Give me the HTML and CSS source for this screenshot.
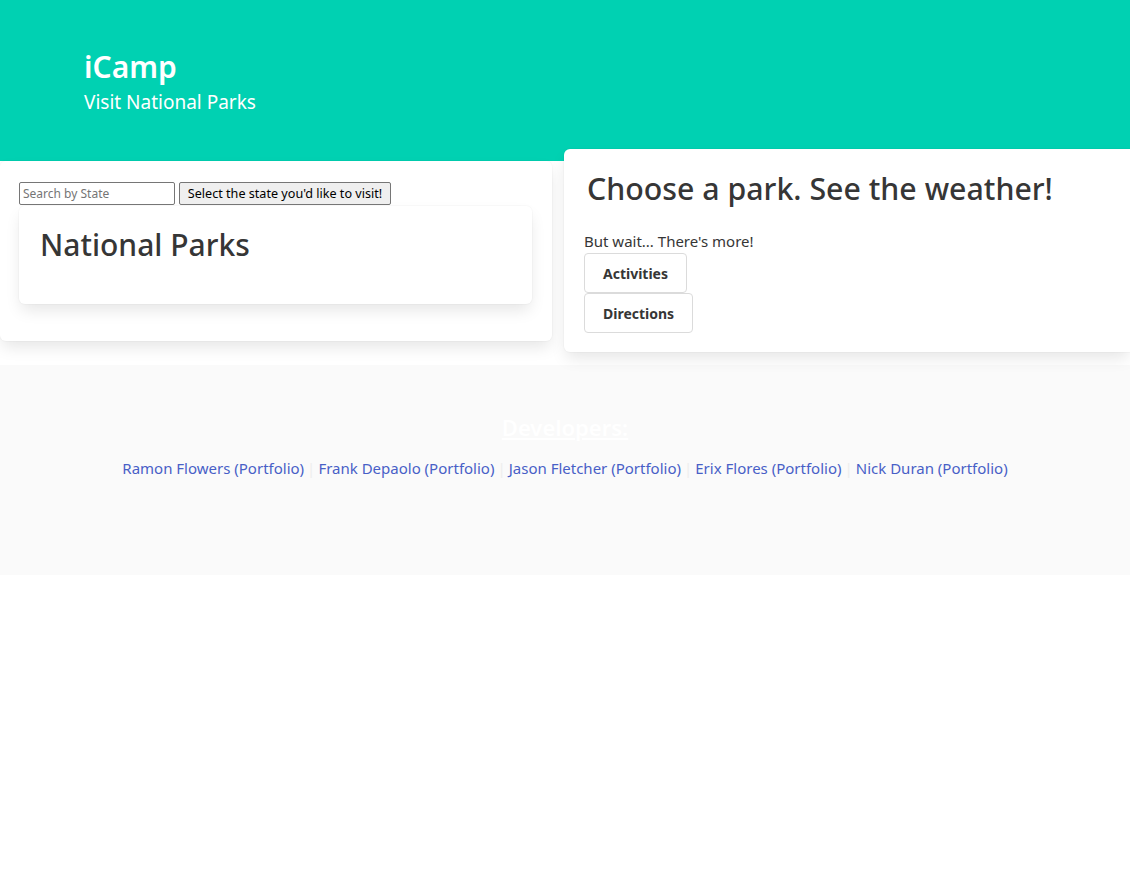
FILE: index.html
```html
<!DOCTYPE html>
<html lang="en">
<head>
<meta charset="utf-8">
<title>iCamp</title>
<link rel="stylesheet" href="styles.css">
</head>
<body>
<section class="hero">
  <h1 class="title">iCamp</h1>
  <h2 class="subtitle">Visit National Parks</h2>
</section>
<main class="columns">
  <section class="card card-left">
    <div class="search-row">
      <input class="search" type="text" placeholder="Search by State">
      <button class="select-btn" type="button">Select the state you'd like to visit!</button>
    </div>
    <div class="box">
      <h2 class="box-title">National Parks</h2>
    </div>
  </section>
  <section class="card card-right">
    <h2 class="right-title">Choose a park. See the weather!</h2>
    <p class="more">But wait... There's more!</p>
    <div class="btns">
      <button class="btn" type="button">Activities</button>
      <button class="btn" type="button">Directions</button>
    </div>
  </section>
</main>
<footer class="footer">
  <h3 class="dev-title">Developers:</h3>
  <p class="links">
    <a href="#">Ramon Flowers (Portfolio)</a><span class="sep">|</span><a href="#">Frank Depaolo (Portfolio)</a><span class="sep">|</span><a href="#">Jason Fletcher (Portfolio)</a><span class="sep">|</span><a href="#">Erix Flores (Portfolio)</a><span class="sep">|</span><a href="#">Nick Duran (Portfolio)</a>
  </p>
</footer>
</body>
</html>
```
FILE: styles.css
```css
html, body {
  margin: 0;
  padding: 0;
  background: #fff;
}
body {
  font-family: "Noto Sans", "Open Sans", sans-serif;
  color: #363636;
  font-size: 16px;
  line-height: 1.5;
}
.hero {
  background: #00d1b2;
  color: #fff;
  padding: 49px 84px 45px;
  height: 67px;
}
.title {
  margin: 0;
  font-size: 30px;
  font-weight: 600;
  line-height: 36px;
}
.subtitle {
  margin: 4px 0 0;
  font-size: 19px;
  font-weight: 400;
  line-height: 27px;
}
.columns {
  display: flex;
  align-items: flex-start;
  gap: 12px;
  width: 1130px;
}
.card {
  background: #fff;
  border-radius: 6px;
  box-shadow: 0 8px 16px -2px rgba(10,10,10,0.1), 0 0 0 1px rgba(10,10,10,0.02);
}
.card-left {
  width: 513px;
  padding: 21px 20px 36px 19px;
  height: 123px;
}
.search-row {
  display: flex;
  gap: 4px;
  height: 23px;
  align-items: flex-start;
}
.search {
  width: 156px;
  height: 23px;
  box-sizing: border-box;
  border: 1px solid #767676;
  border-radius: 2px;
  padding: 1px 3px;
  font-family: "Noto Sans", sans-serif;
  font-size: 12px;
}
.search::placeholder { color: #757575; }
.select-btn {
  height: 23px;
  width: 212px;
  box-sizing: border-box;
  border: 1px solid #767676;
  border-radius: 2px;
  background: #efefef;
  padding: 0 4px;
  font-family: "Noto Sans", sans-serif;
  font-size: 12.6px;
  color: #000;
}
.box {
  margin-top: 1px;
  background: #fff;
  border-radius: 6px;
  box-shadow: 0 8px 16px -2px rgba(10,10,10,0.1), 0 0 0 1px rgba(10,10,10,0.02);
  padding: 19px 21px 20px;
  height: 59px;
}
.box-title {
  margin: 0;
  font-size: 30px;
  font-weight: 500;
  line-height: 40px;
  color: #363636;
}
.card-right {
  flex: 1;
  margin-top: -12px;
  padding: 20px 20px 20px 20px;
  border-radius: 6px 0 0 6px;
  height: 163px;
}
.right-title {
  margin: 0 0 0 3px;
  font-size: 30.3px;
  font-weight: 500;
  line-height: 40px;
  color: #363636;
}
.more {
  margin: 20px 0 0;
  line-height: 24px;
  font-size: 15px;
}
.btns {
  display: flex;
  flex-direction: column;
  align-items: flex-start;
}
.btn {
  height: 40px;
  box-sizing: border-box;
  padding: 0 18px;
  background: #fff;
  border: 1px solid #dbdbdb;
  border-radius: 4px;
  font-family: "Noto Sans", sans-serif;
  font-weight: 700;
  font-size: 14px;
  color: #363636;
}
.footer {
  margin-top: 13px;
  background: #fafafa;
  padding: 47px 24px 95px;
  text-align: center;
}
.dev-title {
  margin: 0;
  color: #fff;
  text-decoration: underline;
  font-size: 22px;
  font-weight: 600;
  line-height: 30px;
}
.links {
  margin: 14px 0 0;
  font-size: 15px;
  line-height: 24px;
}
.links a {
  color: #485fc7;
  text-decoration: none;
}
.sep {
  color: #eeeeee;
  margin: 0 3px;
}
```
